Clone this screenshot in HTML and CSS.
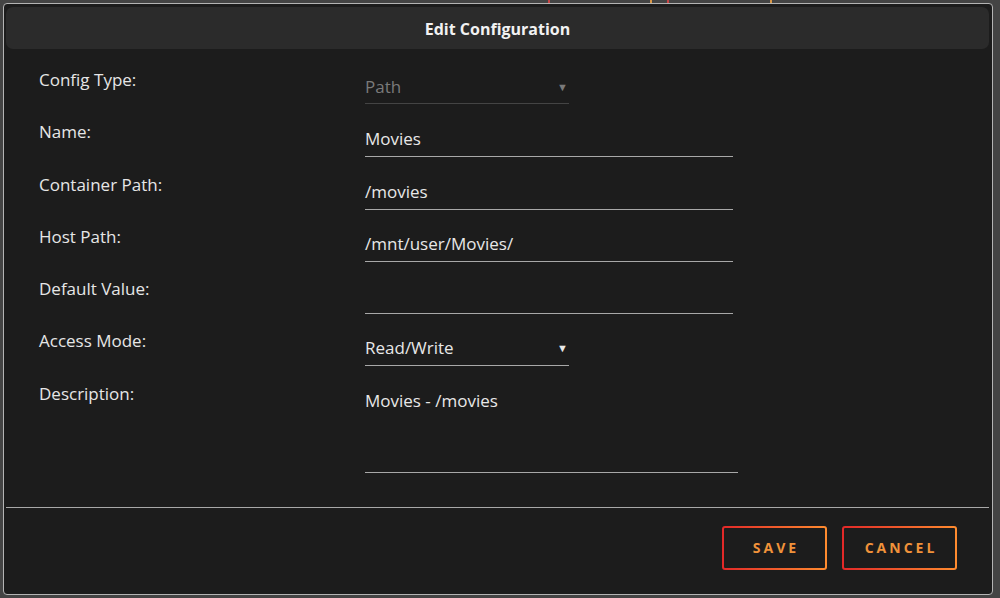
FILE: index.html
```html
<!DOCTYPE html>
<html>
<head>
<meta charset="utf-8">
<link rel="stylesheet" href="styles.css">
</head>
<body>
<div class="backdrop">
  <span class="mark red" style="left:548px"></span>
  <span class="mark orange" style="left:650px"></span>
  <span class="mark red" style="left:667px"></span>
  <span class="mark orange" style="left:770px"></span>
</div>
<div class="dialog">
  <div class="title">Edit Configuration</div>
  <div class="form">
    <div class="row">
      <div class="label">Config Type:</div>
      <div class="field select disabled"><span>Path</span><span class="arrow">&#9660;</span></div>
    </div>
    <div class="row">
      <div class="label">Name:</div>
      <div class="field text">Movies</div>
    </div>
    <div class="row">
      <div class="label">Container Path:</div>
      <div class="field text">/movies</div>
    </div>
    <div class="row">
      <div class="label">Host Path:</div>
      <div class="field text">/mnt/user/Movies/</div>
    </div>
    <div class="row">
      <div class="label">Default Value:</div>
      <div class="field text"></div>
    </div>
    <div class="row">
      <div class="label">Access Mode:</div>
      <div class="field select"><span>Read/Write</span><span class="arrow">&#9660;</span></div>
    </div>
    <div class="row desc-row">
      <div class="label">Description:</div>
      <div class="field area">Movies - /movies</div>
    </div>
  </div>
  <div class="sep"></div>
  <div class="footer">
    <button class="btn save">SAVE</button>
    <button class="btn cancel">CANCEL</button>
  </div>
</div>
</body>
</html>
```
FILE: styles.css
```css
* { box-sizing: border-box; }
html, body { margin: 0; padding: 0; }
body {
  width: 1000px;
  height: 598px;
  background: #444444;
  font-family: "Open Sans", "Noto Sans", sans-serif;
  padding: 3px 7px 0 3px;
  position: relative;
  overflow: hidden;
}
.backdrop {
  position: absolute;
  left: 0; top: 0;
  width: 1000px; height: 3px;
}
.mark {
  position: absolute;
  top: 0;
  width: 2px;
  height: 3px;
}
.mark.red { background: #c84545; }
.mark.orange { background: #d99848; }

.dialog {
  position: relative;
  width: 990px;
  height: 592px;
  background: #1c1c1c;
  border: 1px solid #b4b4b4;
  border-radius: 4px;
  display: flex;
  flex-direction: column;
}
.title {
  margin: 3px 3px 0 2px;
  height: 42px;
  background: #2b2b2b;
  border-radius: 7px;
  color: #f2f2f2;
  font-weight: 700;
  font-size: 16px;
  display: flex;
  align-items: center;
  justify-content: center;
  padding-top: 1px;
}
.form {
  padding: 21px 0 0 35px;
  display: flex;
  flex-direction: column;
}
.row {
  display: grid;
  grid-template-columns: 326px 1fr;
  align-items: start;
  height: 52.3px;
}
.row.desc-row { height: 91px; }
.label {
  color: #e6e6e6;
  font-size: 17px;
  line-height: 20px;
}
.field {
  margin-top: 7px;
  font-size: 17px;
  line-height: 20px;
  color: #e8e8e8;
  border-bottom: 1px solid #a8a8a8;
  padding-bottom: 7px;
  min-height: 28px;
}
.field.text { width: 368px; }
.field.select {
  width: 204px;
  display: flex;
  justify-content: space-between;
  align-items: center;
  padding-bottom: 7px;
  min-height: 28px;
}
.field.select.disabled {
  color: #7a7a7a;
  border-bottom-color: #444;
  padding-bottom: 6px;
  min-height: 27px;
}
.arrow {
  font-size: 11px;
  line-height: 20px;
  margin-right: 1px;
}
.field.area {
  width: 373px;
  height: 82px;
  padding-bottom: 0;
}
.sep {
  margin: 32px 3px 0 2px;
  height: 1px;
  background: #a8a8a8;
}
.footer {
  display: flex;
  justify-content: flex-end;
  gap: 15px;
  padding: 18px 35px 0 0;
}
.btn {
  height: 44px;
  border: 2px solid transparent;
  border-radius: 3px;
  background:
    linear-gradient(#1c1c1c, #1c1c1c) padding-box,
    linear-gradient(90deg, #e22828 0%, #ff8c2f 100%) border-box;
  color: #f0923a;
  font-family: "Open Sans", "Noto Sans", sans-serif;
  font-weight: 700;
  font-size: 14px;
  letter-spacing: 3px;
  padding: 0 0 0 3px;
  cursor: pointer;
}
.btn.save { width: 105px; }
.btn.cancel { width: 115px; }
```
